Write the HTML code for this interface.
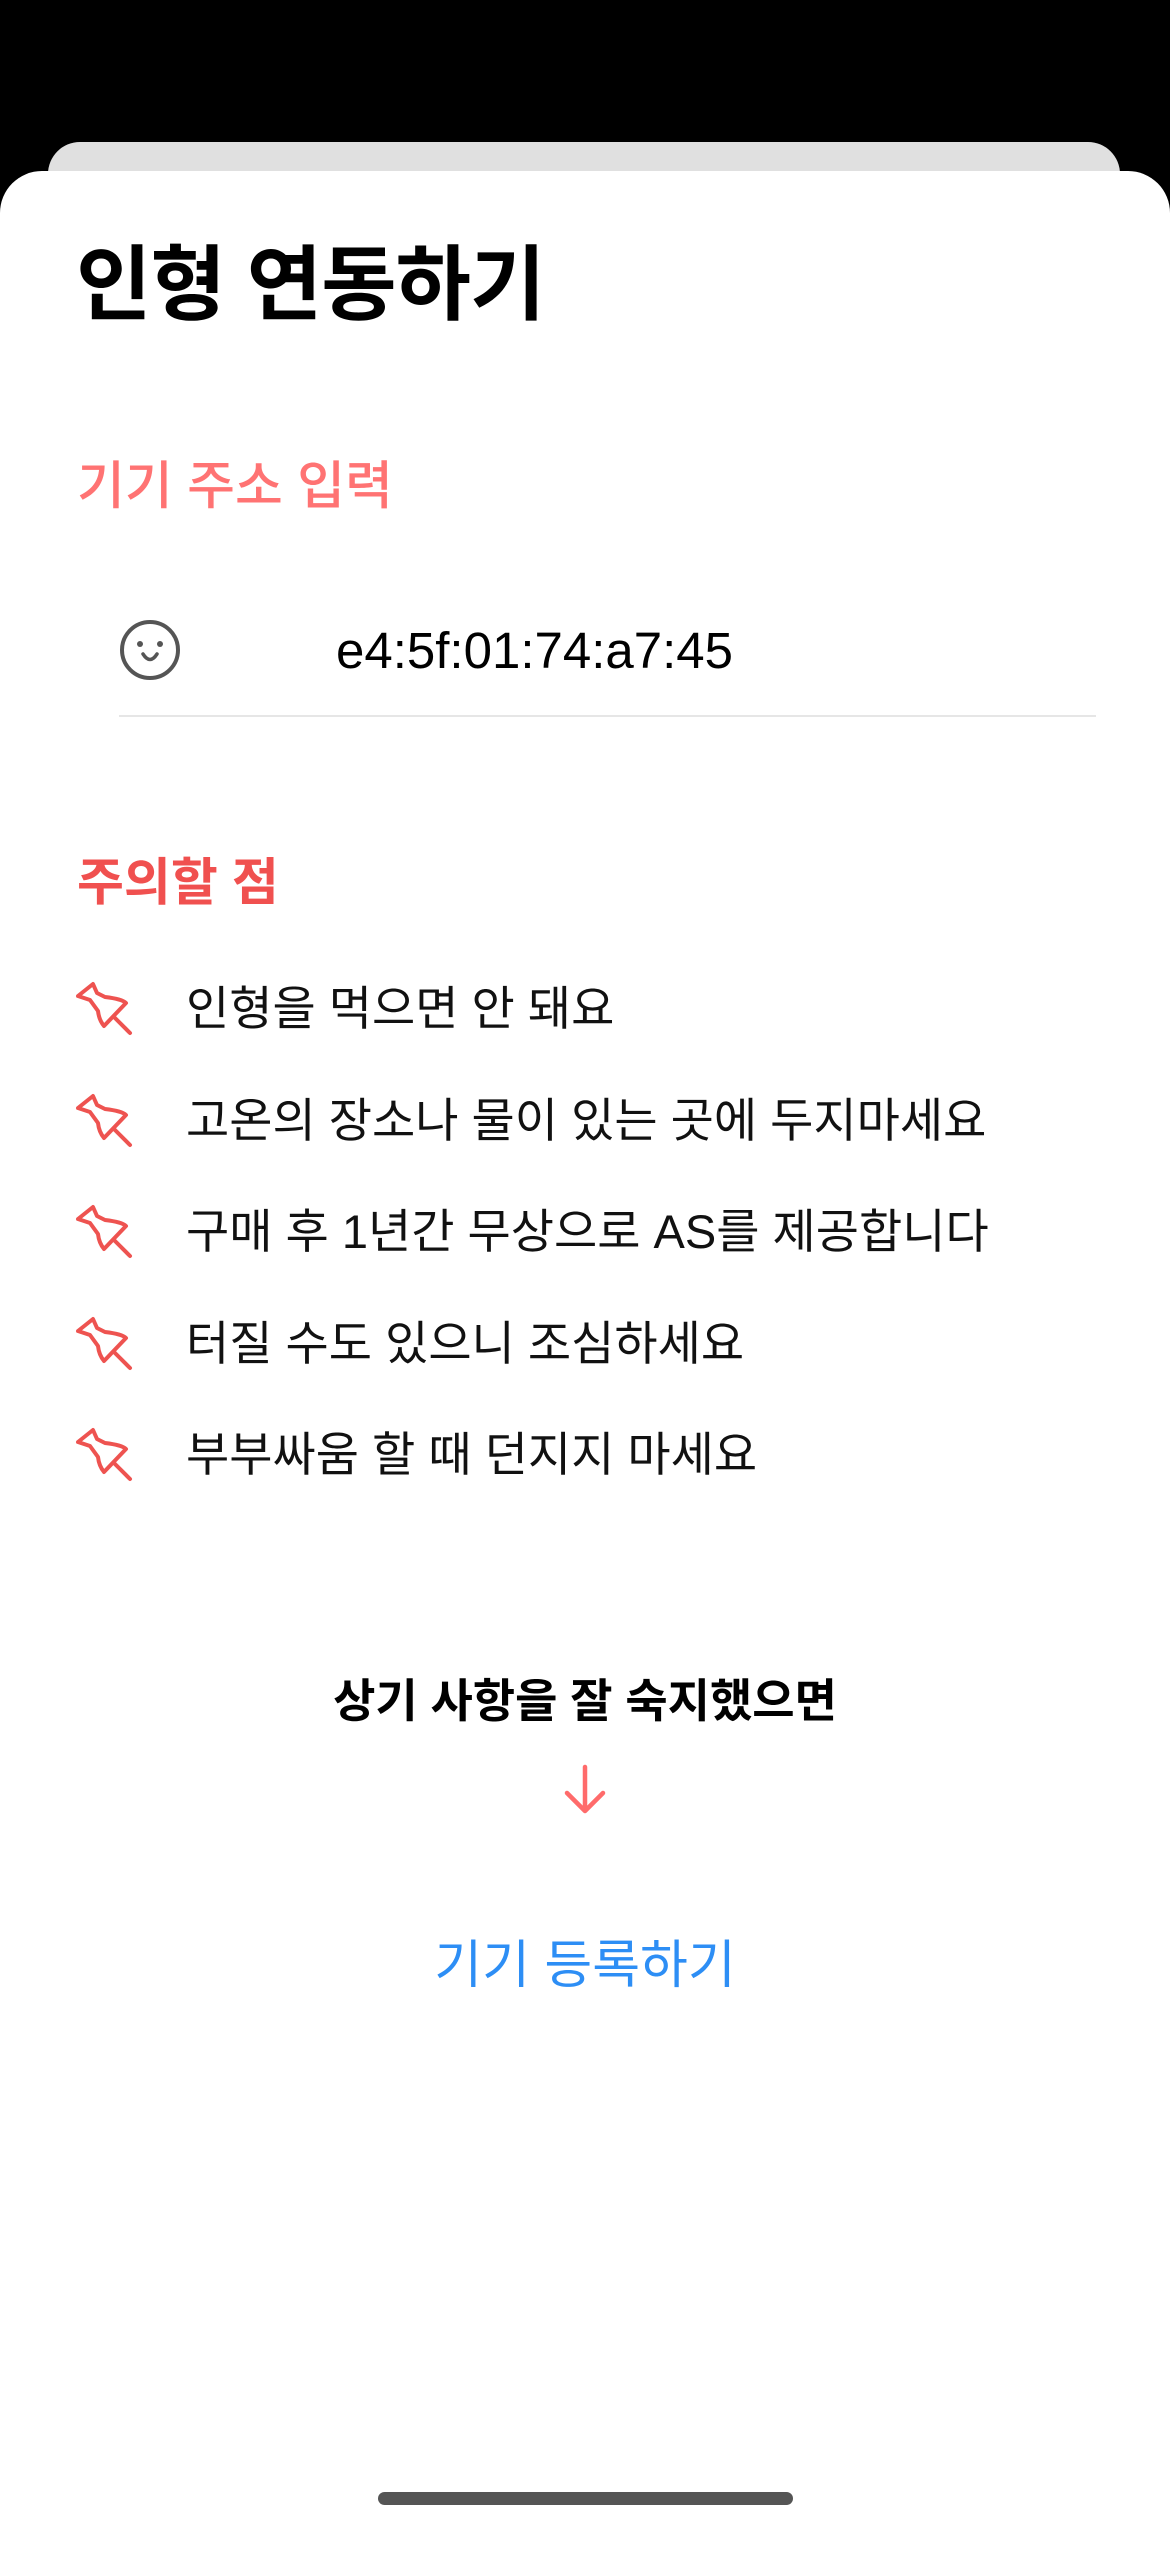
<!DOCTYPE html>
<html><head><meta charset="utf-8"><style>
html,body{margin:0;padding:0;background:#000;}
body{width:1170px;height:2532px;position:relative;overflow:hidden;font-family:"Liberation Sans","Noto Sans CJK KR",sans-serif;}
.a{position:absolute;white-space:nowrap;}
.card{position:absolute;left:48px;top:142px;width:1072px;height:200px;background:#e0e0e0;border-radius:32px;}
.sheet{position:absolute;left:0;top:171px;width:1170px;height:2400px;background:#fff;border-radius:42px 42px 0 0;}
.t{line-height:80px;}
.li{left:186px;font-size:47px;color:#111;line-height:60px;}
.pin{left:70px;width:70px;height:70px;}
</style></head><body>
<div class="card"></div>
<div class="sheet"></div>
<div class="a t" style="left:76px;top:246px;font-size:82px;font-weight:bold;color:#000;letter-spacing:-1px;">인형 연동하기</div>
<div class="a t" style="left:77px;top:447px;font-size:52px;font-weight:500;color:#ff7373;">기기 주소 입력</div>
<svg class="a" style="left:118px;top:618px" width="64" height="64" viewBox="0 0 64 64"><circle cx="32" cy="32" r="28" fill="none" stroke="#555" stroke-width="4"/><circle cx="22" cy="26" r="3" fill="#555"/><circle cx="42" cy="26" r="3" fill="#555"/><path d="M25 36 Q32 47 39 36" fill="none" stroke="#555" stroke-width="3.5" stroke-linecap="round"/></svg>
<div class="a t" style="left:336px;top:611px;font-size:51px;color:#000;">e4:5f:01:74:a7:45</div>
<div class="a" style="left:119px;top:715px;width:977px;height:2px;background:#e6e6e6;"></div>
<div class="a t" style="left:77px;top:843px;font-size:51px;font-weight:bold;color:#f0504f;">주의할 점</div>
<svg width="0" height="0" style="position:absolute"><defs><g id="p" fill="none" stroke="#ee5350" stroke-width="4" stroke-linejoin="round" stroke-linecap="round"><path d="M8 26 L23 14 L27 23 L35 27 Q52 29 56 33 L34 56 Q29 50 28 41 L20 30 Z"/><path d="M45 48 L60 63"/></g></defs></svg>
<svg class="a pin" style="top:970px" viewBox="0 0 70 70"><use href="#p"/></svg>
<svg class="a pin" style="top:1082px" viewBox="0 0 70 70"><use href="#p"/></svg>
<svg class="a pin" style="top:1193px" viewBox="0 0 70 70"><use href="#p"/></svg>
<svg class="a pin" style="top:1305px" viewBox="0 0 70 70"><use href="#p"/></svg>
<svg class="a pin" style="top:1416px" viewBox="0 0 70 70"><use href="#p"/></svg>
<div class="a li" style="top:979px">인형을 먹으면 안 돼요</div>
<div class="a li" style="top:1091px">고온의 장소나 물이 있는 곳에 두지마세요</div>
<div class="a li" style="top:1202px">구매 후 1년간 무상으로 AS를 제공합니다</div>
<div class="a li" style="top:1314px">터질 수도 있으니 조심하세요</div>
<div class="a li" style="top:1425px">부부싸움 할 때 던지지 마세요</div>
<div class="a" style="left:0;width:1170px;text-align:center;top:1671px;line-height:60px;font-size:46px;font-weight:bold;color:#000;">상기 사항을 잘 숙지했으면</div>
<svg class="a" style="left:563px;top:1764px" width="44" height="52" viewBox="0 0 44 52"><path d="M22 3 V47 M4 29 L22 47 L40 29" fill="none" stroke="#ff6b6b" stroke-width="4.5" stroke-linecap="round" stroke-linejoin="round"/></svg>
<div class="a" style="left:0;width:1170px;text-align:center;top:1931px;line-height:70px;font-size:52px;color:#2d8ef5;">기기 등록하기</div>
<div class="a" style="left:378px;top:2492px;width:415px;height:13px;border-radius:7px;background:#555;"></div>
</body></html>
